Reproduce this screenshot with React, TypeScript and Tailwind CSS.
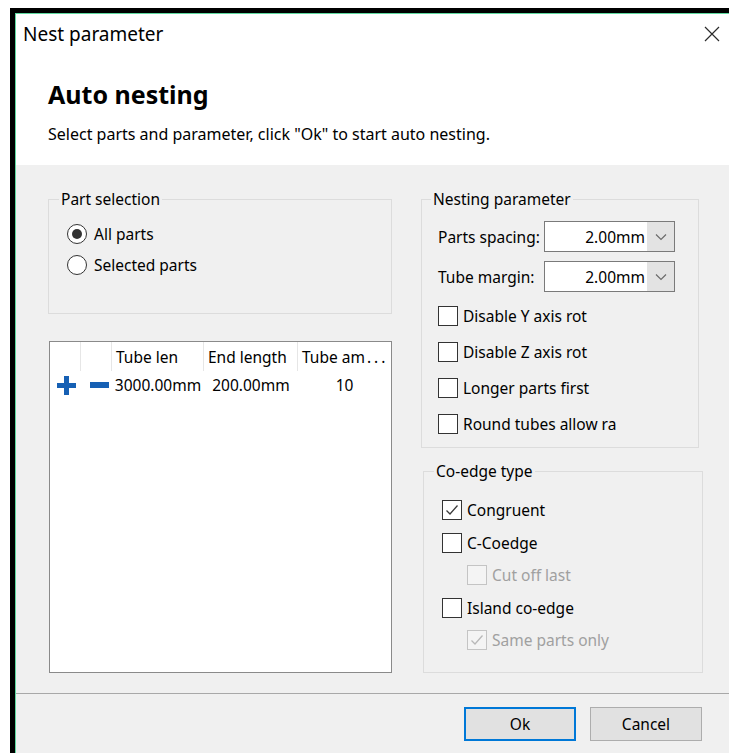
import React from "react";

// Windows-style "Nest parameter" dialog

const Check: React.FC<{ checked?: boolean; disabled?: boolean }> = ({ checked = false, disabled = false }) => (
  <span
    className={`flex h-[20px] w-[20px] shrink-0 items-center justify-center border ${
      disabled ? "border-[#c4c4c4] bg-[#f4f4f4]" : "border-[#333333] bg-white"
    }`}
  >
    {checked && (
      <svg width="16" height="16" viewBox="0 0 16 16" fill="none">
        <path
          d="M2.5 8.5 L6 12 L13.5 3.5"
          stroke={disabled ? "#b8b8b8" : "#3a3a3a"}
          strokeWidth="1.3"
        />
      </svg>
    )}
  </span>
);

const Radio: React.FC<{ checked?: boolean }> = ({ checked = false }) => (
  <span className="flex h-[20px] w-[20px] shrink-0 items-center justify-center rounded-full border border-[#333333] bg-white">
    {checked && <span className="h-[10px] w-[10px] rounded-full bg-[#333333]" />}
  </span>
);

const CheckRow: React.FC<{
  label: string;
  checked?: boolean;
  disabled?: boolean;
  className?: string;
}> = ({ label, checked, disabled, className = "" }) => (
  <div className={`flex items-center gap-[5px] ${className}`}>
    <Check checked={checked} disabled={disabled} />
    <span className={disabled ? "text-[#a0a0a0]" : "text-black"}>{label}</span>
  </div>
);

const Combo: React.FC<{ value: string }> = ({ value }) => (
  <div className="flex h-[31px] w-[131px] border border-[#7a7a7a] bg-white">
    <div className="flex flex-1 items-center justify-end pr-[2px]">{value}</div>
    <div className="flex w-[27px] items-center justify-center bg-[#e3e3e3]">
      <svg width="12" height="8" viewBox="0 0 12 8" fill="none">
        <path d="M1 1.5 L6 6.5 L11 1.5" stroke="#6b6b6b" strokeWidth="1.2" />
      </svg>
    </div>
  </div>
);

export default function App() {
  return (
    <div className="h-[753px] w-[729px] overflow-hidden bg-white font-['Noto_Sans',sans-serif] text-[15.5px] leading-[20px] text-black">
      <div className="ml-[10px] mt-[8px] h-[745px] border-l-[5px] border-t-[5px] border-black">
        <div className="flex h-full flex-col border-l border-t border-[#5fd9a0] bg-white">
          {/* title bar */}
          <div className="flex h-[40px] items-center justify-between pl-[7px] pr-[9px]">
            <span className="text-[19px] leading-[24px]">Nest parameter</span>
            <svg width="16" height="16" viewBox="0 0 16 16" fill="none">
              <path d="M1 1 L15 15 M15 1 L1 15" stroke="#2b2b2b" strokeWidth="1.2" />
            </svg>
          </div>

          {/* header */}
          <div className="h-[111px] pl-[32px] pt-[24px]">
            <div className="text-[25px] font-bold leading-[32px]">Auto nesting</div>
            <div className="mt-[14px] text-[16px]">
              Select parts and parameter, click "Ok" to start auto nesting.
            </div>
          </div>

          {/* body */}
          <div className="flex h-[528px] gap-[29px] bg-[#f0f0f0] pl-[32px]">
            <div className="flex w-[344px] flex-col pt-[24px]">
              <fieldset className="h-[125px] border border-[#dcdcdc]">
                <legend className="ml-[10px] px-[2px]">Part selection</legend>
                <div className="mt-[10px] flex flex-col gap-[1px] pl-[18px]">
                  <div className="flex h-[30px] items-center gap-[7px]">
                    <Radio checked />
                    <span>All parts</span>
                  </div>
                  <div className="flex h-[30px] items-center gap-[7px]">
                    <Radio />
                    <span>Selected parts</span>
                  </div>
                </div>
              </fieldset>

              {/* tube list */}
              <div className="ml-[1px] mt-[27px] h-[332px] border border-[#8a8a8a] bg-white">
                <div className="grid h-[29px] grid-cols-[31px_31px_92px_94px_1fr] items-center">
                  <div className="h-full border-r border-[#e6e6e6]" />
                  <div className="h-full border-r border-[#e6e6e6]" />
                  <div className="flex h-full items-center border-r border-[#e6e6e6] pl-[4px]">Tube len</div>
                  <div className="flex h-full items-center border-r border-[#e6e6e6] pl-[4px]">End length</div>
                  <div className="flex h-full items-center pl-[4px]">
                    Tube am<span className="pl-[2px] tracking-[3px]">...</span>
                  </div>
                </div>
                <div className="grid h-[28px] grid-cols-[31px_31px_92px_94px_1fr] items-center">
                  <div className="flex pl-[7px]">
                    <svg width="19" height="19" viewBox="0 0 19 19">
                      <path d="M7 0 H12 V7 H19 V12 H12 V19 H7 V12 H0 V7 H7 Z" fill="#1660b4" />
                    </svg>
                  </div>
                  <div className="flex pl-[9px]">
                    <svg width="19" height="6" viewBox="0 0 19 6">
                      <rect x="0" y="0" width="19" height="6" fill="#1660b4" />
                    </svg>
                  </div>
                  <div className="text-center">3000.00mm</div>
                  <div className="text-center">200.00mm</div>
                  <div className="text-center">10</div>
                </div>
              </div>
            </div>

            <div className="flex w-[282px] flex-col pt-[24px]">
              <fieldset className="h-[259px] w-[278px] border border-[#dcdcdc]">
                <legend className="ml-[9px] px-[2px]">Nesting parameter</legend>
                <div className="mt-[12px] flex flex-col gap-[9px] pl-[16px]">
                  <div className="flex items-center">
                    <span className="w-[106px]">Parts spacing:</span>
                    <Combo value="2.00mm" />
                  </div>
                  <div className="flex items-center">
                    <span className="w-[106px]">Tube margin:</span>
                    <Combo value="2.00mm" />
                  </div>
                </div>
                <div className="mt-[6px] flex flex-col pl-[16px]">
                  <CheckRow className="h-[36px]" label="Disable Y axis rot" />
                  <CheckRow className="h-[36px]" label="Disable Z axis rot" />
                  <CheckRow className="h-[36px]" label="Longer parts first" />
                  <CheckRow className="h-[36px]" label="Round tubes allow ra" />
                </div>
              </fieldset>

              <fieldset className="ml-[2px] mt-[13px] h-[212px] w-[280px] border border-[#dcdcdc]">
                <legend className="ml-[10px] px-[2px]">Co-edge type</legend>
                <div className="mt-[13px] flex flex-col pl-[18px]">
                  <CheckRow className="h-[32.5px]" label="Congruent" checked />
                  <CheckRow className="h-[32.5px]" label="C-Coedge" />
                  <CheckRow className="h-[32.5px] pl-[25px]" label="Cut off last" disabled />
                  <CheckRow className="h-[32.5px]" label="Island co-edge" />
                  <CheckRow className="h-[32.5px] pl-[25px]" label="Same parts only" checked disabled />
                </div>
              </fieldset>
            </div>
          </div>

          {/* footer */}
          <div className="flex flex-1 justify-end gap-[14px] border-t border-[#a8a8a8] bg-[#f0f0f0] pr-[27px] pt-[13px]">
            <button className="h-[34px] w-[112px] border-2 border-[#0078d7] bg-[#e1e1e1]">Ok</button>
            <button className="h-[34px] w-[112px] border border-[#adadad] bg-[#e1e1e1]">Cancel</button>
          </div>
        </div>
      </div>
    </div>
  );
}
